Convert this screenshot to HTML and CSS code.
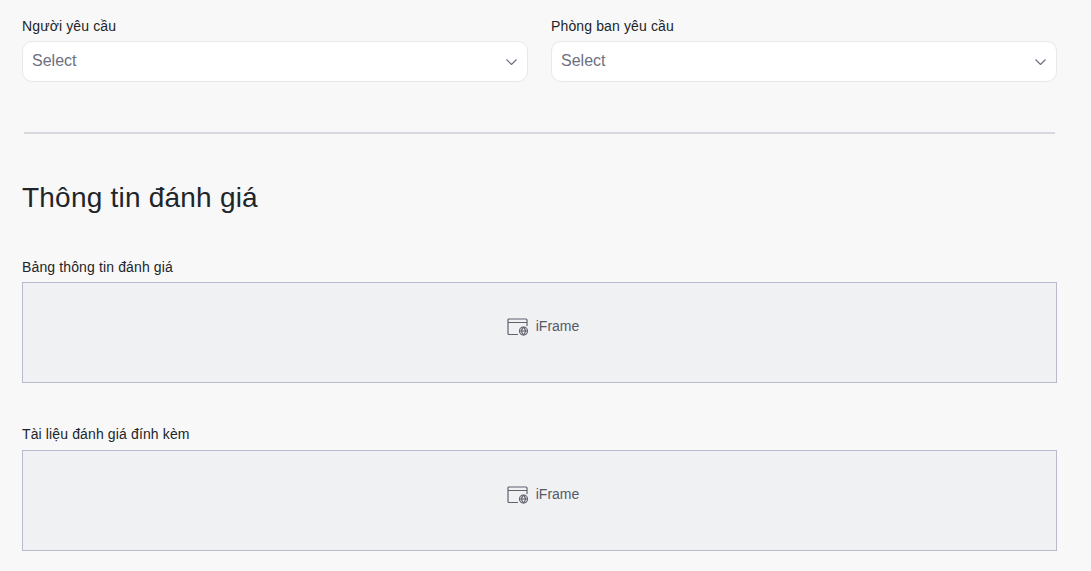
FILE: index.html
```html
<!doctype html>
<html lang="vi">

  <head>
    <meta charset="utf-8">
    <meta name="viewport" content="width=device-width, initial-scale=1">
    <title>Thông tin đánh giá</title>
    <link rel="stylesheet" href="styles.css">
  </head>

  <body>
    <section class="row">
      <div class="field">
        <div class="label">Người yêu cầu</div>
        <div class="select">
          <span>Select</span>
          <svg class="chevron" width="11" height="6" viewBox="0 0 11 6"><path d="M.5.5l5 5 5-5"/></svg>
        </div>
      </div>
      <div class="field">
        <div class="label">Phòng ban yêu cầu</div>
        <div class="select">
          <span>Select</span>
          <svg class="chevron" width="11" height="6" viewBox="0 0 11 6"><path d="M.5.5l5 5 5-5"/></svg>
        </div>
      </div>
    </section>
    <hr class="divider">
    <h2 class="title">Thông tin đánh giá</h2>
    <section class="block">
      <div class="label">Bảng thông tin đánh giá</div>
      <div class="iframe">
        <svg class="frame-icon" width="22" height="18" viewBox="0 0 22 18">
          <path d="M11 16.500H2a1 1 0 0 1-1-1V2a1 1 0 0 1 1-1h17a1 1 0 0 1 1 1v6M1 4.500h19"/>
          <circle cx="16.500" cy="13" r="4"/>
          <path d="M12.500 13h8M16.500 9c-2.200 2.400-2.200 5.600 0 8M16.500 9c2.200 2.400 2.200 5.600 0 8"/>
        </svg>
        <span>iFrame</span>
      </div>
    </section>
    <section class="block">
      <div class="label">Tài liệu đánh giá đính kèm</div>
      <div class="iframe">
        <svg class="frame-icon" width="22" height="18" viewBox="0 0 22 18">
          <path d="M11 16.500H2a1 1 0 0 1-1-1V2a1 1 0 0 1 1-1h17a1 1 0 0 1 1 1v6M1 4.500h19"/>
          <circle cx="16.500" cy="13" r="4"/>
          <path d="M12.500 13h8M16.500 9c-2.200 2.400-2.200 5.600 0 8M16.500 9c2.200 2.400 2.200 5.600 0 8"/>
        </svg>
        <span>iFrame</span>
      </div>
    </section>
  </body>

</html>
```

FILE: styles.css
```css
html,
body {
  margin: 0;
  padding: 0;
  height: 100%;
}

body {
  padding: 17px 34px 0 22px;
  box-sizing: border-box;
  overflow: hidden;
  background: #f8f8f8;
  color: #212529;
  font-family: "Liberation Sans", Arial, sans-serif;
  font-size: 14px;
}

.row {
  display: flex;
  gap: 23px;
}

.field {
  flex: 1;
}

.label {
  height: 18px;
  line-height: 18px;
  margin-bottom: 6px;
  letter-spacing: .13px;
}

.select {
  display: flex;
  align-items: center;
  justify-content: space-between;
  height: 41px;
  padding: 0 10px 2px 9px;
  box-sizing: border-box;
  background: #fff;
  border: 1px solid #e8e8ea;
  border-radius: 10px;
  color: #6c7080;
  font-size: 16px;
}

.chevron {
  margin-top: 2px;
}

.chevron path {
  fill: none;
  stroke: #6c7080;
  stroke-width: 1.2;
}

.divider {
  margin: 50px 2px 0;
  height: 2px;
  border: 0;
  background: #d8d8de;
}

.title {
  margin: 47px 0 0;
  height: 34px;
  line-height: 34px;
  font-size: 28px;
  font-weight: 400;
  letter-spacing: .22px;
}

.block {
  margin-top: 43px;
}

.block + .block {
  margin-top: 42px;
}

.block .label {
  margin-bottom: 6px;
}

.block + .block .label {
  margin-bottom: 7px;
}

.iframe {
  display: flex;
  justify-content: center;
  gap: 7px;
  height: 101px;
  padding: 34px 0 0 7px;
  box-sizing: border-box;
  background: #f0f1f3;
  border: 1px solid #b9bbcd;
  color: #555966;
}

.iframe span {
  line-height: 18px;
}

.frame-icon {
  flex: none;
  margin-top: 1px;
}

.frame-icon path,
.frame-icon circle {
  fill: none;
  stroke: #60636f;
  stroke-width: 1.2;
}
```
